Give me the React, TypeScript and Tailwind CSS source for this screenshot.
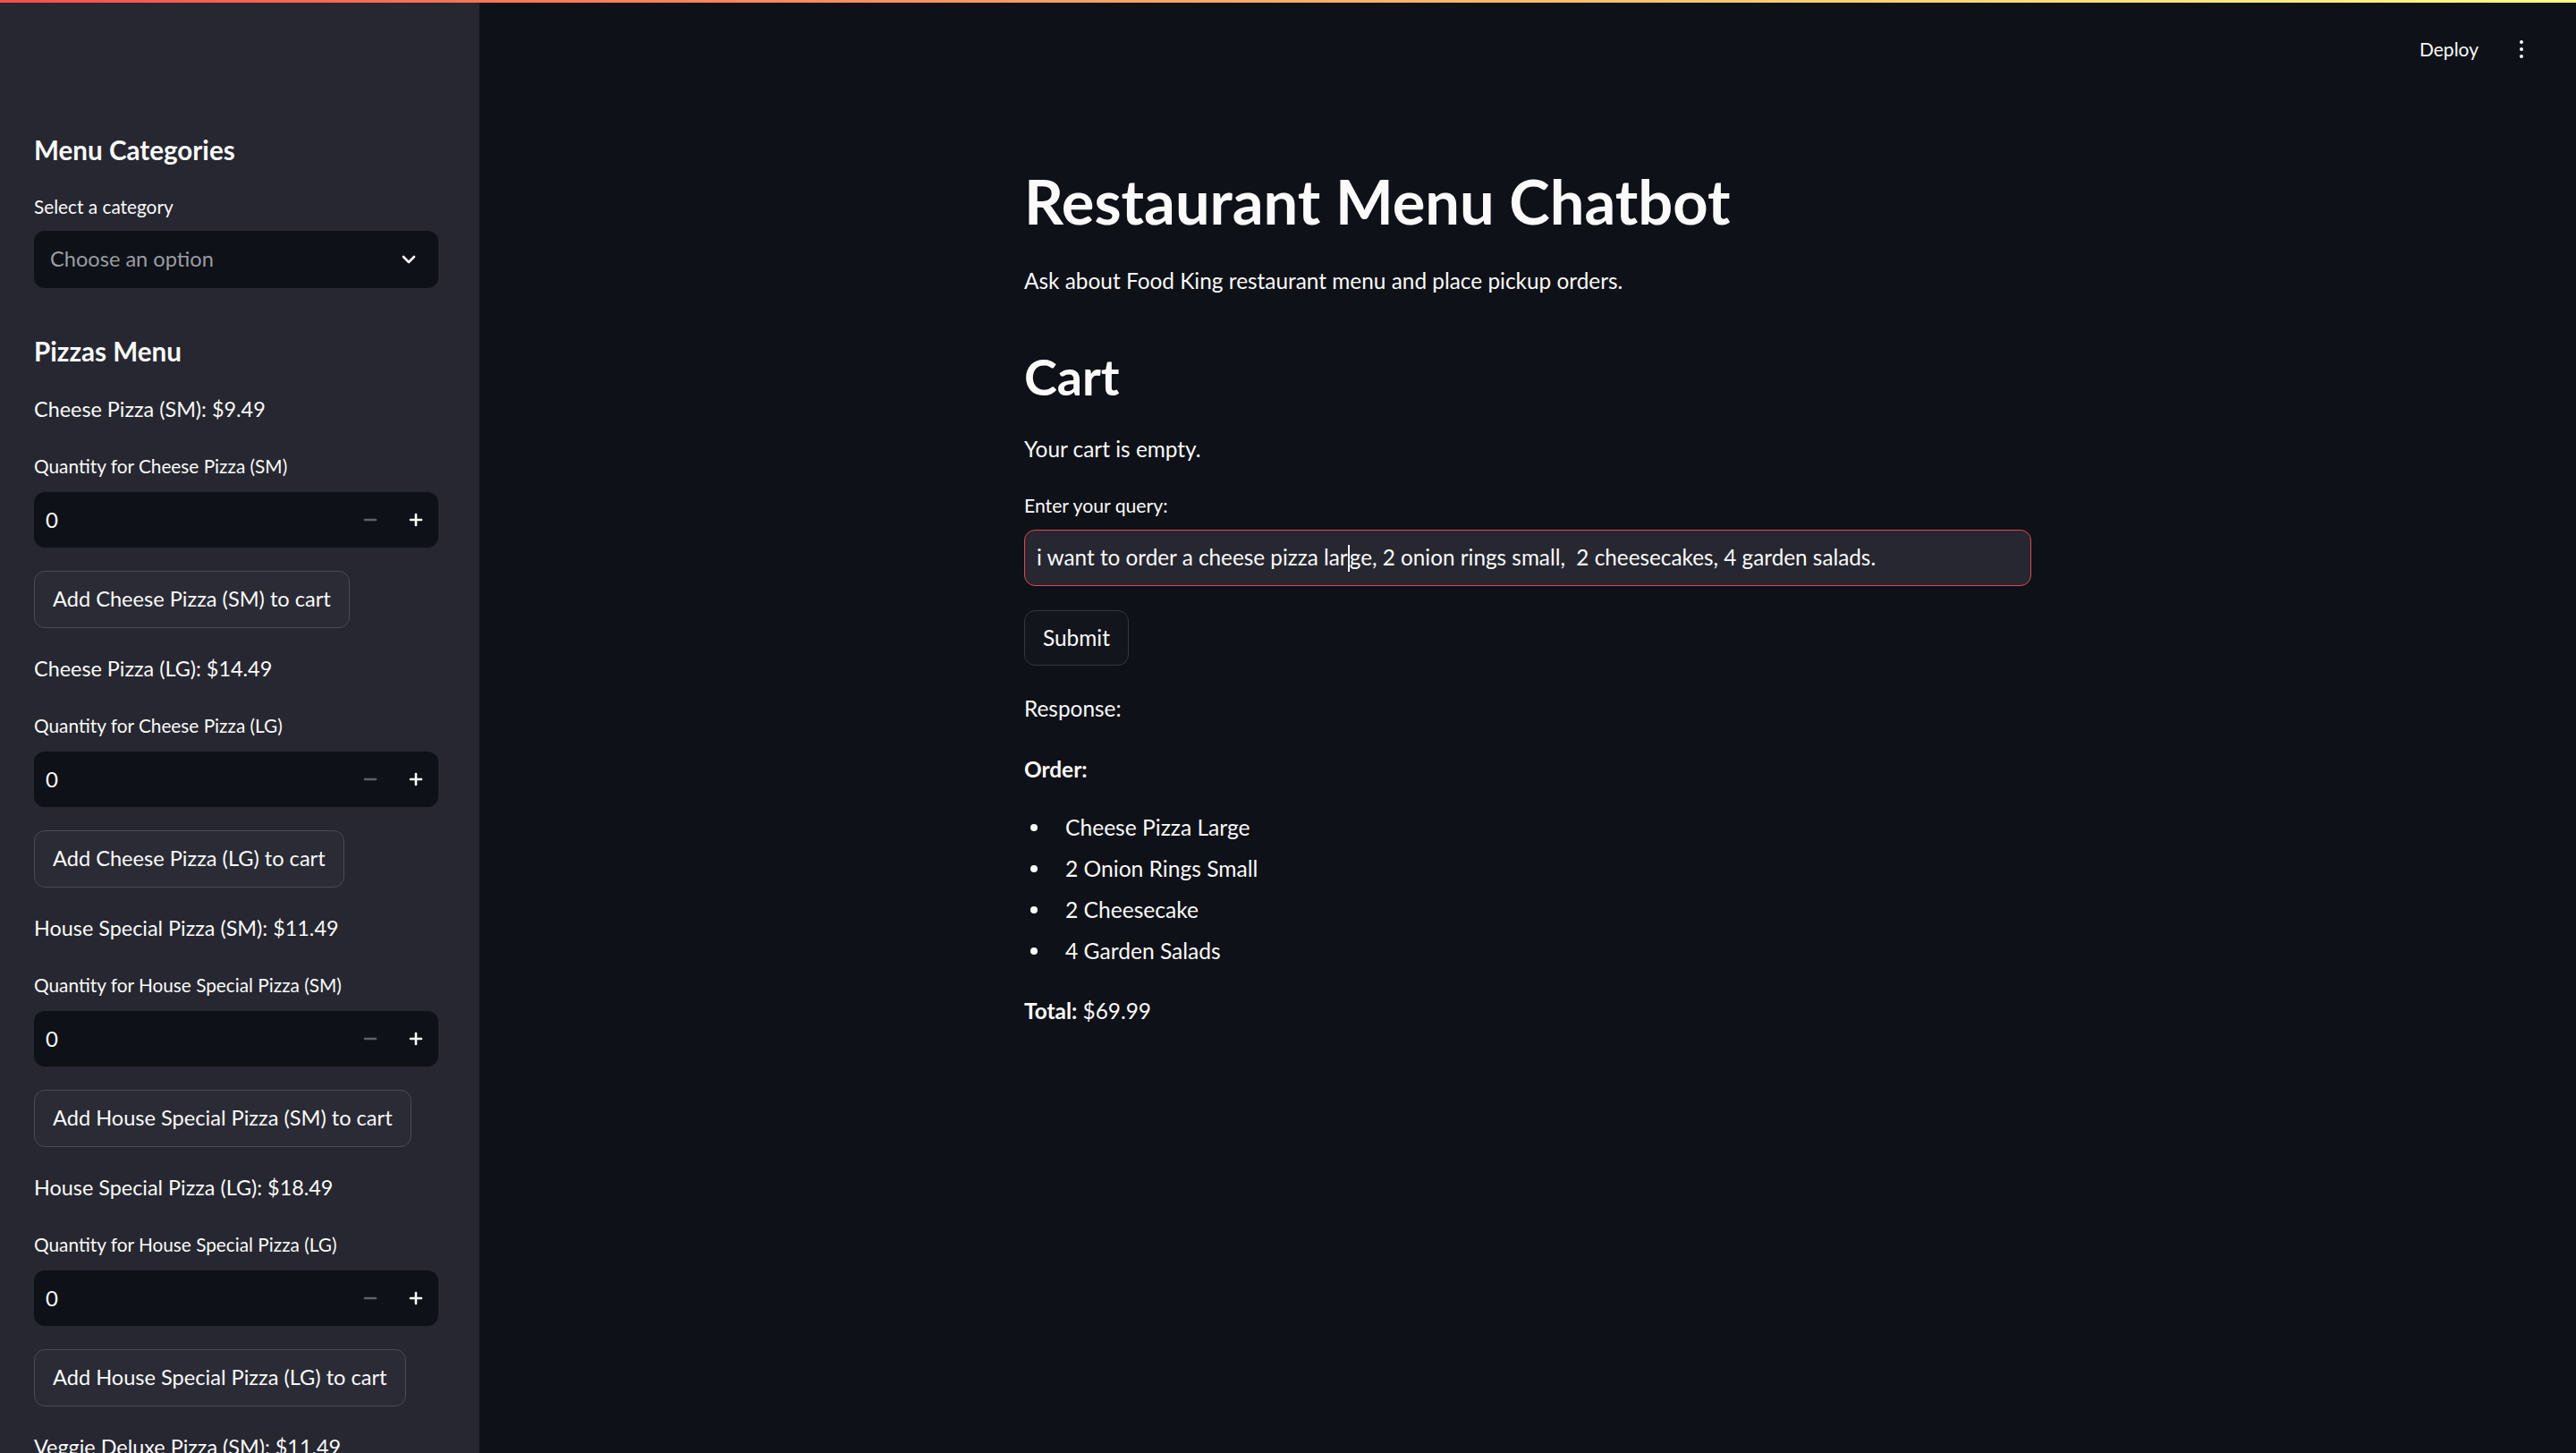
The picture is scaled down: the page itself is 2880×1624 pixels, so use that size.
import { ReactNode } from "react";

const pizzas = [
  { name: "Cheese Pizza (SM)", price: "$9.49" },
  { name: "Cheese Pizza (LG)", price: "$14.49" },
  { name: "House Special Pizza (SM)", price: "$11.49" },
  { name: "House Special Pizza (LG)", price: "$18.49" },
  { name: "Veggie Deluxe Pizza (SM)", price: "$11.49" },
  { name: "Veggie Deluxe Pizza (LG)", price: "$17.49" },
];

const orderItems = ["Cheese Pizza Large", "2 Onion Rings Small", "2 Cheesecake", "4 Garden Salads"];

function StepIcon({ plus }: { plus?: boolean }) {
  return (
    <svg width="16" height="16" viewBox="0 0 16 16" fill="none">
      <path d="M2 8h12" stroke="currentColor" strokeWidth="2.6" strokeLinecap="round" />
      {plus && <path d="M8 2v12" stroke="currentColor" strokeWidth="2.6" strokeLinecap="round" />}
    </svg>
  );
}

function NumberInput() {
  return (
    <div className="mt-[11px] flex h-[62px] rounded-[12px] bg-[#0e1117] overflow-hidden">
      <div className="flex flex-1 items-center pl-[13px] text-[24px]">0</div>
      <div className="flex w-[51px] items-center justify-center text-[#5f6168]">
        <StepIcon />
      </div>
      <div className="flex w-[51px] items-center justify-center text-[#fafafa]">
        <StepIcon plus />
      </div>
    </div>
  );
}

function SideButton({ children }: { children: ReactNode }) {
  return (
    <div className="mt-[26px] flex">
      <button className="flex h-[64px] items-center whitespace-nowrap rounded-[12px] border border-[#4a4b54] bg-[#2a2b35] px-[20px] text-[23.6px] text-[#fafafa]">
        {children}
      </button>
    </div>
  );
}

export default function App() {
  return (
    <div className="relative flex h-[1624px] w-full overflow-hidden bg-[#0e1117] font-['Lato',sans-serif] text-[#fafafa]">
      {/* header decoration */}
      <div className="absolute left-0 right-0 top-0 z-10 h-[3px] bg-gradient-to-r from-[#ff4b4b] to-[#fffd80]" />

      {/* Sidebar */}
      <aside className="h-full w-[536px] shrink-0 overflow-hidden bg-[#262730] pl-[38px] pr-[46px] pt-[149px]">
        <h3 className="whitespace-nowrap text-[29.6px] font-bold leading-[38px]">Menu Categories</h3>
        <div className="mt-[26px] whitespace-nowrap text-[20.8px] leading-[36px]">Select a category</div>
        <div className="mt-[9px] flex h-[64px] items-center justify-between rounded-[12px] bg-[#0e1117] pl-[18px] pr-[25px]">
          <span className="text-[23.6px] text-[#9a9ca4]">Choose an option</span>
          <svg width="16" height="10" viewBox="0 0 16 10" fill="none">
            <path d="M2 2l6 6 6-6" stroke="#fafafa" strokeWidth="2.6" strokeLinecap="round" strokeLinejoin="round" />
          </svg>
        </div>

        <h3 className="mt-[52px] whitespace-nowrap text-[29.6px] font-bold leading-[38px]">Pizzas Menu</h3>

        {pizzas.map((p) => (
          <div key={p.name} className="mt-[25px]">
            <div className="whitespace-nowrap text-[23.4px] leading-[41px]">
              {p.name}: {p.price}
            </div>
            <div className="mt-[25px] whitespace-nowrap text-[20.8px] leading-[36px]">Quantity for {p.name}</div>
            <NumberInput />
            <SideButton>Add {p.name} to cart</SideButton>
          </div>
        ))}
      </aside>

      {/* Main */}
      <main className="flex min-w-0 flex-1 flex-col">
        <header className="flex h-[96px] items-start justify-end pt-[37px]">
          <span className="text-[21px] leading-[36px]">Deploy</span>
          <div className="ml-[38px] mr-[51px] flex h-[36px] w-[20px] flex-col items-center justify-center gap-[3.5px]">
            <span className="h-[4.5px] w-[4.5px] rounded-full bg-[#fafafa]" />
            <span className="h-[4.5px] w-[4.5px] rounded-full bg-[#fafafa]" />
            <span className="h-[4.5px] w-[4.5px] rounded-full bg-[#fafafa]" />
          </div>
        </header>

        <div className="mx-auto w-[1126px] pt-[87px]">
          <h1 className="text-[68.6px] font-bold leading-[84px]">Restaurant Menu Chatbot</h1>
          <p className="mt-[26px] text-[24.4px] leading-[41px]">Ask about Food King restaurant menu and place pickup orders.</p>

          <h2 className="mt-[52px] text-[55.7px] font-bold leading-[69px]">Cart</h2>
          <p className="mt-[26px] text-[24.4px] leading-[41px]">Your cart is empty.</p>

          <div className="mt-[25px] text-[21.2px] leading-[36px]">Enter your query:</div>
          <div className="mt-[9px] flex h-[63px] items-center whitespace-pre rounded-[12px] border border-[#e0484c] bg-[#262730] pl-[13px] text-[24.3px]">
            <span>i want to order a cheese pizza lar</span>
            <span className="h-[30px] w-[2px] bg-[#fafafa]" />
            <span>ge, 2 onion rings small,  2 cheesecakes, 4 garden salads.</span>
          </div>

          <div className="mt-[27px] flex">
            <button className="flex h-[62px] items-center rounded-[12px] border border-[#34363d] bg-[#12151c] px-[20px] text-[24.4px] text-[#fafafa]">
              Submit
            </button>
          </div>

          <p className="mt-[27px] text-[24.4px] leading-[41px]">Response:</p>
          <p className="mt-[27px] text-[24.4px] font-bold leading-[41px]">Order:</p>

          <ul className="mt-[22px]">
            {orderItems.map((item) => (
              <li key={item} className="flex items-center text-[24.6px] leading-[46px]">
                <span className="ml-[7px] h-[8px] w-[8px] rounded-full bg-[#fafafa]" />
                <span className="ml-[31px]">{item}</span>
              </li>
            ))}
          </ul>

          <p className="mt-[23px] text-[24.4px] leading-[41px]">
            <strong className="font-bold">Total:</strong> $69.99
          </p>
        </div>
      </main>
    </div>
  );
}
